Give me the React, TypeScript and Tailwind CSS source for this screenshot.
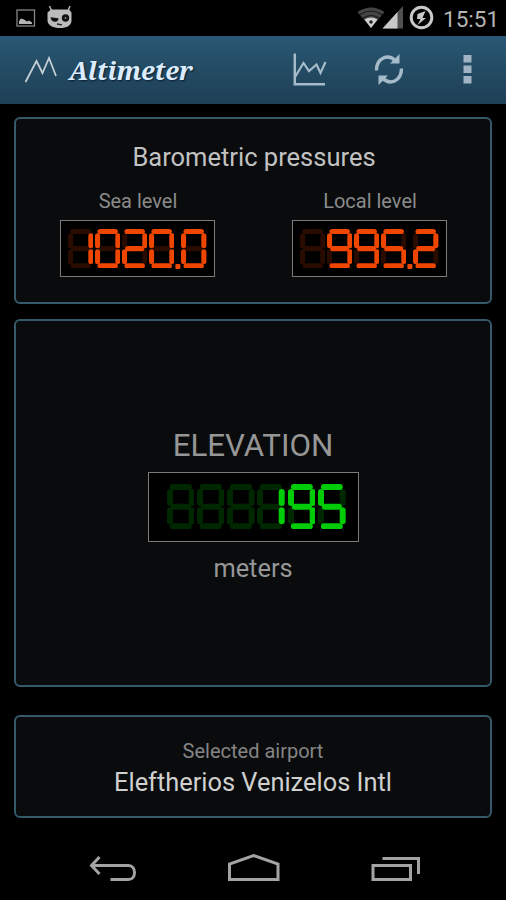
const DIGITS: Record<string, string> = {
  "0": "abcdef", "1": "bc", "2": "abged", "5": "afgcd", "9": "abcdfg", " ": "",
};

type DisplayProps = {
  value: string;
  lit: string;
  dim: string;
  w: number;
  h: number;
  t: number;
  gap: number;
};

function Digit({ ch, lit, dim, w, h, t }: { ch: string; lit: string; dim: string; w: number; h: number; t: number }) {
  const c = t / 2;
  const i = t * 0.85;
  const k = t * 0.48;
  const v = t * 0.6;
  const m = h / 2;
  const seg: Record<string, [number, number, number, number]> = {
    a: [c + k, c, w - c - k, c],
    b: [w - c, c + i, w - c, m - v],
    c: [w - c, m + v, w - c, h - c - i],
    d: [c + k, h - c, w - c - k, h - c],
    e: [c, m + v, c, h - c - i],
    f: [c, c + i, c, m - v],
    g: [c + k * 1.3, m, w - c - k * 1.3, m],
  };
  const on = DIGITS[ch];
  const names = Object.keys(seg).sort((p, q) => Number(on.includes(p)) - Number(on.includes(q)));
  return (
    <svg width={w} height={h} className="block shrink-0">
      {names.map((n) => (
        <line
          key={n}
          x1={seg[n][0]} y1={seg[n][1]} x2={seg[n][2]} y2={seg[n][3]}
          stroke={on.includes(n) ? lit : dim}
          strokeWidth={t}
          strokeLinecap="round"
        />
      ))}
    </svg>
  );
}

function SegmentDisplay({ value, lit, dim, w, h, t, gap }: DisplayProps) {
  return (
    <div role="img" aria-label={value.trim()} className="flex items-end" style={{ gap }}>
      {value.split("").map((ch, n) =>
        ch === "." ? (
          <svg key={n} width={4.2} height={h} className="block shrink-0 overflow-visible">
            <rect x={-0.6} y={h - 4.2} width={5} height={5} rx={1} fill={lit} />
          </svg>
        ) : (
          <Digit key={n} ch={ch} lit={lit} dim={dim} w={w} h={h} t={t} />
        )
      )}
    </div>
  );
}

function Pressure({ label, value, pad }: { label: string; value: string; pad: string }) {
  return (
    <div className="flex w-[155px] flex-col items-center">
      <div className="h-[29px] pl-[2px] text-[20px] leading-[20px] whitespace-nowrap text-[#8b8b8b]">{label}</div>
      <div className={`h-[57px] w-full border-[1.5px] border-[#7a7a7a] bg-black pt-2 ${pad}`}>
        <SegmentDisplay value={value} lit="#ee4600" dim="#2a0b00" w={25.4} h={39.3} t={5.1} gap={1.5} />
      </div>
    </div>
  );
}

function StatusBar() {
  return (
    <div className="flex h-[36px] items-start justify-between bg-black">
      <svg width="90" height="36">
        <rect x="17" y="10" width="17.5" height="16" fill="none" stroke="#858585" strokeWidth="1.3" />
        <path d="M19 24v-3l2-2.5 3 1 3 2 2-1 3 2v1.500z" fill="#b5b5b5" />
        <path d="M49.500 6l2.500 6M70 6l-2.500 6" stroke="#b5b5b5" strokeWidth="1.5" />
        <path d="M51 9.500h18l2.500 3v8c0 5-5 7.500-11.500 7.500s-12.500-2.500-12.500-7.500v-8z" fill="#bcbcbc" />
        <path d="M50.500 17.200l8 1c0 5-7.500 5-8-1z" fill="#101010" />
        <circle cx="65.500" cy="18" r="3.700" fill="#101010" />
        <circle cx="65.500" cy="18" r="0.900" fill="#8c8c8c" />
        <path d="M57 24l5 .8" stroke="#222" strokeWidth="1.300" />
      </svg>
      <div className="flex">
        <svg width="82" height="36" viewBox="355 0 82 36">
          <path d="M357.500 12Q371 3 384.500 12L371 28z" fill="#454545" />
          <path d="M360 14.500Q371 7.500 382 14.500M363 18Q371 13 379 18" fill="none" stroke="#151515" strokeWidth="1.200" />
          <path d="M364.500 19.500Q371 15.500 377.500 19.500L371 28z" fill="#d0d0d0" />
          <circle cx="371" cy="22" r="1.800" fill="#222" />
          <path d="M382.500 28.500L403 6v22.500z" fill="#505050" />
          <path d="M382.500 28.500L397.500 12v16.500z" fill="#c8c8c8" />
          <circle cx="421.500" cy="17.500" r="10.300" fill="none" stroke="#c8c8c8" strokeWidth="3" />
          <path d="M425.500 11l-8 3-.5 5h3.500l-3 6 8.500-7h-3.500z" fill="#c8c8c8" />
        </svg>
        <div className="w-[69px] pt-[6px] pl-[6px] text-[22.5px] leading-[26px] whitespace-nowrap text-[#b4b4b4]">15:51</div>
      </div>
    </div>
  );
}

function Header() {
  return (
    <header className="flex h-[68px] items-center bg-linear-to-b from-[#2a5876] via-[#234b63] to-[#1e4057]">
      <svg width="66" height="68" viewBox="0 36 66 68" fill="none">
        <path d="M25.500 82L36.500 61L42.500 73L49 58L56 76" stroke="#c3cdd4" strokeWidth="1.800" />
      </svg>
      <h1 className="w-[222px] pl-[3px] font-['Noto_Serif','Droid_Serif','DejaVu_Serif_Condensed','DejaVu_Serif',serif] text-[25.5px] leading-[30px] font-bold tracking-[-0.1px] whitespace-nowrap text-[#dcecff] italic [text-shadow:1px_1px_2px_#0a1c2c]">
        Altimeter
      </h1>
      <svg width="218" height="68" viewBox="288 36 218 68">
        <path d="M294.800 53.500V84.300H325" fill="none" stroke="#a5bbca" strokeWidth="2.500" />
        <path d="M295 77L303.500 63L309 71L316.500 64.500L320.500 73L325.500 62" fill="none" stroke="#a5bbca" strokeWidth="2.200" />
        <path d="M376.500 70.500c0-13 12-17 19-9.500M401.500 68.500c0 13-12 17-19 9.500" fill="none" stroke="#a5bbca" strokeWidth="3.400" />
        <path d="M399.500 54v9.500h-9.500zM378.500 85v-9.500h9.500z" fill="#a5bbca" />
        <path d="M463.500 55h8v7.500h-8zM463.500 65.500h8V73h-8zM463.500 76h8v7.500h-8z" fill="#a2b4c3" />
      </svg>
    </header>
  );
}

const panel = "flex flex-col items-center rounded-[6px] border-2 border-[#36596a] bg-[#090b0c]";

export default function App() {
  return (
    <div className="flex h-[900px] w-[506px] flex-col overflow-hidden bg-black font-[Roboto,sans-serif]">
      <StatusBar />
      <Header />
      <main className="flex flex-col px-[14px] pt-[13px]">
        <section className={`${panel} h-[187px]`}>
          <h2 className="mt-[22px] h-[50px] pl-[2px] text-[25.5px] leading-[33px] whitespace-nowrap text-[#c2c2c2]">Barometric pressures</h2>
          <div className="flex gap-[77px]">
            <Pressure label="Sea level" value="1020.0" pad="pl-[7.5px]" />
            <Pressure label="Local level" value=" 995.2" pad="pl-[7.5px]" />
          </div>
        </section>
        <section className={`${panel} mt-[15px] h-[368px]`}>
          <div className="mt-[106px] h-[45px] text-[31.3px] leading-[38px] whitespace-nowrap text-[#969696]">ELEVATION</div>
          <div className="h-[70px] w-[211px] border-[1.5px] border-[#7a7a7a] bg-black pt-[11px] pl-[18px]">
            <SegmentDisplay value="   195" lit="#00cc08" dim="#002800" w={27.7} h={45.3} t={6} gap={2.6} />
          </div>
          <div className="mt-[10px] text-[25.4px] leading-[32px] whitespace-nowrap text-[#969696]">meters</div>
        </section>
        <section className={`${panel} mt-[28px] h-[103px]`}>
          <div className="mt-[22px] text-[20px] leading-[24px] whitespace-nowrap text-[#858585]">Selected airport</div>
          <div className="mt-[2px] text-[25.4px] leading-[34px] whitespace-nowrap text-[#d0d0d0]">Eleftherios Venizelos Intl</div>
        </section>
      </main>
      <nav>
        <svg width="506" height="82" viewBox="0 818 506 82" fill="none" stroke="#a3a3a3" strokeWidth="3">
          <path d="M99.500 857l-8 8.500 8 8.500M92 865.500h36.500c8 0 8 14 0 14H110.500" />
          <path d="M229.500 879.500V864L253.500 855.500L278 864v15.500z" />
          <path d="M373 865.500h37.500v14H373zM382.500 858.500H418.500V874" />
        </svg>
      </nav>
    </div>
  );
}
